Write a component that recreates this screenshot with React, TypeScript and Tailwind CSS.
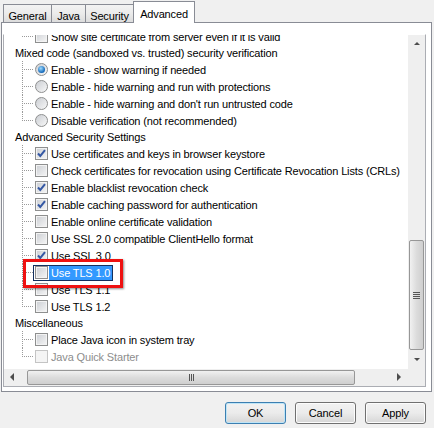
import React from "react";

type Item =
  | { kind: "header"; text: string }
  | {
      kind: "check" | "radio";
      text: string;
      on?: boolean;
      last?: boolean;
      disabled?: boolean;
      selected?: boolean;
    };

const items: Item[] = [
  { kind: "check", text: "Show site certificate from server even if it is valid", last: true },
  { kind: "header", text: "Mixed code (sandboxed vs. trusted) security verification" },
  { kind: "radio", text: "Enable - show warning if needed", on: true },
  { kind: "radio", text: "Enable - hide warning and run with protections" },
  { kind: "radio", text: "Enable - hide warning and don't run untrusted code" },
  { kind: "radio", text: "Disable verification (not recommended)", last: true },
  { kind: "header", text: "Advanced Security Settings" },
  { kind: "check", text: "Use certificates and keys in browser keystore", on: true },
  { kind: "check", text: "Check certificates for revocation using Certificate Revocation Lists (CRLs)" },
  { kind: "check", text: "Enable blacklist revocation check", on: true },
  { kind: "check", text: "Enable caching password for authentication", on: true },
  { kind: "check", text: "Enable online certificate validation" },
  { kind: "check", text: "Use SSL 2.0 compatible ClientHello format" },
  { kind: "check", text: "Use SSL 3.0", on: true },
  { kind: "check", text: "Use TLS 1.0", selected: true },
  { kind: "check", text: "Use TLS 1.1" },
  { kind: "check", text: "Use TLS 1.2", last: true },
  { kind: "header", text: "Miscellaneous" },
  { kind: "check", text: "Place Java icon in system tray" },
  { kind: "check", text: "Java Quick Starter", last: true, disabled: true },
];

const CheckBox = ({ on, disabled }: { on?: boolean; disabled?: boolean }) => (
  <span
    className={
      disabled
        ? "w-[13px] h-[13px] shrink-0 border border-[#c4c4c4] bg-[#f4f4f4]"
        : "w-[13px] h-[13px] shrink-0 border border-[#8e8f8f] bg-gradient-to-br from-[#cbced3] to-[#f6f6f6] shadow-[inset_0_0_0_1px_#f3f3f3] flex items-center justify-center"
    }
  >
    {on && (
      <svg width="11" height="11" viewBox="0 0 11 11">
        <path d="M2 5.5 L4.3 8 L9 2.2" fill="none" stroke="#3558a4" strokeWidth="2" />
      </svg>
    )}
  </span>
);

const Radio = ({ on }: { on?: boolean }) => (
  <span className="w-[13px] h-[13px] shrink-0 rounded-full border border-[#8e8f8f] bg-gradient-to-br from-[#cbced3] to-[#f8f8f8] flex items-center justify-center">
    {on && <span className="w-[7px] h-[7px] rounded-full bg-[radial-gradient(circle_at_40%_35%,#9fdcff,#1166b8_70%)]" />}
  </span>
);

const Row = ({ item }: { item: Item }) => {
  if (item.kind === "header") {
    return <div className="h-[16px] pl-[11px] flex items-center whitespace-nowrap">{item.text}</div>;
  }
  return (
    <div className="h-[17px] flex items-center whitespace-nowrap">
      <span className="w-[18px] shrink-0" />
      <span className="relative w-[11px] h-full shrink-0">
        <span
          className={
            item.last
              ? "absolute left-0 top-0 h-[9px] border-l border-dotted border-[#9a9a9a]"
              : "absolute left-0 top-0 h-full border-l border-dotted border-[#9a9a9a]"
          }
        />
        <span className="absolute left-0 top-[8px] w-full border-t border-dotted border-[#9a9a9a]" />
      </span>
      <span
        className={
          item.selected
            ? "h-[16px] flex items-center border border-[#13305f] pl-px"
            : "h-[16px] flex items-center border border-transparent pl-px"
        }
      >
        {item.kind === "radio" ? <Radio on={item.on} /> : <CheckBox on={item.on} disabled={item.disabled} />}
        <span
          className={
            item.selected
              ? "ml-px px-[2px] h-[14px] leading-[14px] bg-[#3399ff] text-white"
              : item.disabled
                ? "ml-px px-[2px] h-[14px] leading-[14px] text-[#8d8d8d]"
                : "ml-px px-[2px] h-[14px] leading-[14px]"
          }
        >
          {item.text}
        </span>
      </span>
    </div>
  );
};

const Arrow = ({ dir }: { dir: "up" | "down" | "left" | "right" }) => {
  const pts = {
    up: "1,4 4,1 7,4",
    down: "1,1 4,4 7,1",
    left: "4,0 0,4 4,8",
    right: "0,0 4,4 0,8",
  }[dir];
  const vertical = dir === "up" || dir === "down";
  return (
    <svg width={vertical ? 8 : 5} height={vertical ? 5 : 9} viewBox={vertical ? "0 0 8 5" : "0 0 5 9"}>
      <polygon points={pts} fill="#4d4d4d" />
    </svg>
  );
};

const Button = ({ label, primary }: { label: string; primary?: boolean }) => (
  <button
    className={
      primary
        ? "w-[61px] h-[22px] rounded-[3px] border border-[#3c7fb1] bg-gradient-to-b from-[#f2f2f2] via-[#ebebeb] to-[#d6d6d6] shadow-[inset_0_0_0_1px_#bfe5f7] text-black"
        : "w-[61px] h-[22px] rounded-[3px] border border-[#707070] bg-gradient-to-b from-[#f2f2f2] via-[#ebebeb] to-[#d6d6d6] shadow-[inset_0_0_0_1px_#fcfcfc] text-black"
    }
  >
    {label}
  </button>
);

export default function App() {
  return (
    <div className="relative w-[434px] h-[428px] overflow-hidden bg-[#f0f0f0] text-[11px] tracking-[-0.15px] text-black font-['Liberation_Sans',Arial,sans-serif]">
      <div className="h-[22px] flex items-end pl-[2px]">
        <div className="ml-px w-[49px] h-[18px] bg-gradient-to-b from-[#f3f3f3] via-[#ebebeb] to-[#dcdcdc] border border-b-0 border-[#898c95] flex justify-center pt-[3px]">
          General
        </div>
        <div className="-ml-px w-[35px] h-[18px] bg-gradient-to-b from-[#f3f3f3] via-[#ebebeb] to-[#dcdcdc] border border-b-0 border-[#898c95] flex justify-center pt-[3px]">
          Java
        </div>
        <div className="-ml-px w-[49px] h-[18px] bg-gradient-to-b from-[#f3f3f3] via-[#ebebeb] to-[#dcdcdc] border border-b-0 border-[#898c95] flex justify-center pt-[3px]">
          Security
        </div>
        <div className="relative z-10 -ml-px mt-[1px] self-start w-[62px] h-[22px] bg-white border border-b-0 border-[#898c95] flex justify-center pt-[4px]">
          Advanced
        </div>
      </div>

      <div className="ml-px w-[431px] h-[370px] border border-[#898c95] bg-white pl-px pt-[11px]">
        <div className="w-[423px] h-[353px] border border-[#abadb3] border-t-white flex flex-col">
          <div className="flex flex-1 min-h-0">
            <div className="relative flex-1 overflow-hidden">
              <div className="-mt-[7px]">
                {items.map((it, i) => (
                  <Row key={i} item={it} />
                ))}
              </div>
            </div>
            <div className="w-[17px] bg-[#efefef] flex flex-col">
              <div className="h-[17px] flex items-center justify-center">
                <Arrow dir="up" />
              </div>
              <div className="h-[188px]" />
              <div className="mx-px h-[110px] rounded-[2px] border border-[#979797] bg-gradient-to-r from-[#f1f1f1] via-[#dcdcdc] to-[#cfcfcf] flex flex-col items-center justify-center gap-[1px]">
                <span className="w-[7px] border-t border-[#555]" />
                <span className="w-[7px] border-t border-[#555]" />
                <span className="w-[7px] border-t border-[#555]" />
                <span className="w-[7px] border-t border-[#555]" />
              </div>
              <div className="flex-1 flex items-center justify-center">
                <Arrow dir="down" />
              </div>
            </div>
          </div>
          <div className="h-[17px] flex">
            <div className="flex-1 flex bg-[#efefef]">
              <div className="w-[17px] flex items-center justify-center">
                <Arrow dir="left" />
              </div>
              <div className="w-[6px]" />
              <div className="my-px w-[328px] rounded-[2px] border border-[#979797] bg-gradient-to-b from-[#f1f1f1] via-[#dcdcdc] to-[#cfcfcf] flex items-center justify-center gap-[1px]">
                <span className="h-[7px] border-l border-[#555]" />
                <span className="h-[7px] border-l border-[#555]" />
                <span className="h-[7px] border-l border-[#555]" />
              </div>
              <div className="flex-1" />
              <div className="w-[17px] flex items-center justify-center">
                <Arrow dir="right" />
              </div>
            </div>
            <div className="w-[17px] bg-[#efefef]" />
          </div>
        </div>
      </div>

      <div className="mt-[10px] pr-[8px] flex justify-end gap-[9px]">
        <Button label="OK" primary />
        <Button label="Cancel" />
        <Button label="Apply" />
      </div>

      <div className="absolute left-[23px] top-[259px] w-[100px] h-[29px] border-[3px] border-[#ee1111] shadow-[1px_1px_2px_rgba(0,0,0,0.45)]" />
    </div>
  );
}
